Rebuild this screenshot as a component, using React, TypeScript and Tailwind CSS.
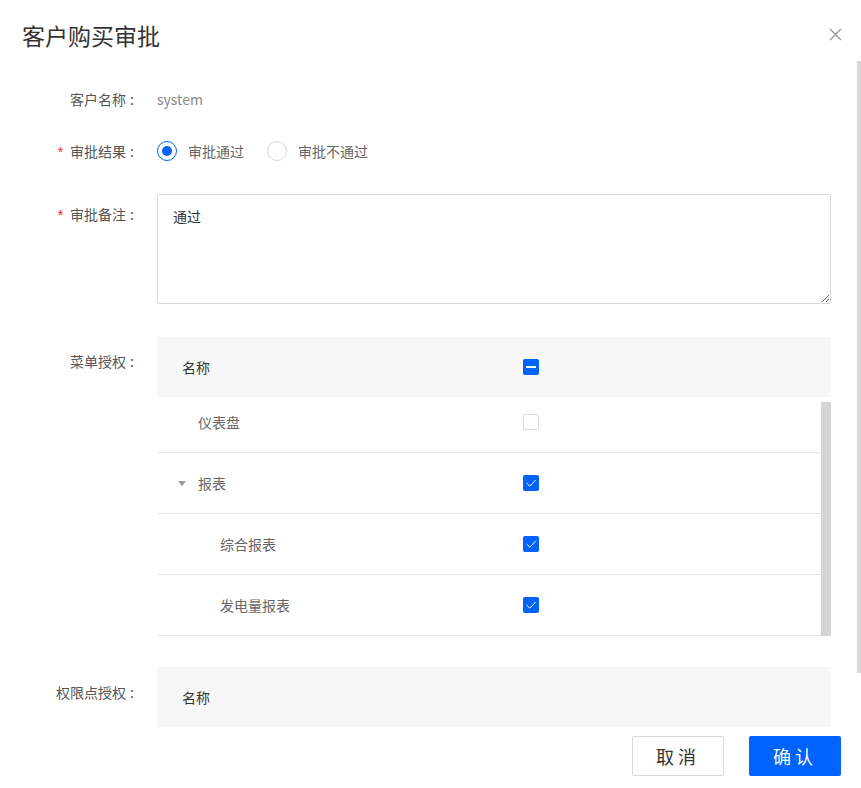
import * as React from 'react';

const BLUE = '#0062ff';

const Label: React.FC<{ text: string; required?: boolean; className?: string }> = ({ text, required, className }) => (
  <div className={`w-[137px] shrink-0 text-right text-[14px] leading-[22px] text-[#555] ${className || ''}`}>
    {required && <span className="mr-[7px] font-['Liberation_Sans',sans-serif] text-[14px] text-[#f5222d]">*</span>}
    {text}
    <span className="ml-[4px] mr-[3px]">:</span>
  </div>
);

const Radio: React.FC<{ checked?: boolean; label: string }> = ({ checked, label }) => (
  <label className="flex items-center">
    <span
      className={`flex h-5 w-5 items-center justify-center rounded-full border bg-white ${
        checked ? 'border-[#0062ff]' : 'border-[#d9d9d9]'
      }`}
    >
      {checked && <span className="h-[10px] w-[10px] rounded-full bg-[#0062ff]" />}
    </span>
    <span className="ml-[11px] text-[14px] leading-[22px] text-[#666]">{label}</span>
  </label>
);

const Checkbox: React.FC<{ state: 'on' | 'off' | 'half' }> = ({ state }) => {
  if (state === 'off') return <span className="block h-4 w-4 rounded-[2px] border border-[#d9d9d9] bg-white" />;
  return (
    <span className="flex h-4 w-4 items-center justify-center rounded-[2px]" style={{ background: BLUE }}>
      {state === 'half' ? (
        <span className="h-[1.5px] w-[10px] bg-white" />
      ) : (
        <svg width="16" height="16" viewBox="0 0 16 16" fill="none">
          <path d="M3.6 8 L6.8 11.2 L12.6 5" stroke="#fff" strokeWidth="1" />
        </svg>
      )}
    </span>
  );
};

const menuRows = [
  { name: '仪表盘', indent: 'pl-[41px]', state: 'off' as const },
  { name: '报表', indent: 'pl-[21px]', state: 'on' as const, caret: true },
  { name: '综合报表', indent: 'pl-[63px]', state: 'on' as const },
  { name: '发电量报表', indent: 'pl-[63px]', state: 'on' as const },
];

export default function App() {
  return (
    <div className="flex h-[788px] w-[861px] flex-col overflow-hidden bg-white font-['Noto_Sans_CJK_SC','Noto_Sans',sans-serif]">
      <div className="flex h-[61px] shrink-0 items-start justify-between pl-[22px] pr-[19px]">
        <div className="mt-[20px] text-[23px] leading-[30px] text-[#333]">客户购买审批</div>
        <svg className="mt-[28px]" width="13" height="13" viewBox="0 0 13 13" fill="none">
          <path d="M1 1 L12 12 M12 1 L1 12" stroke="#999" strokeWidth="1.4" />
        </svg>
      </div>

      {/* dialog body with its scrollbar */}
      <div className="flex h-[667px] shrink-0">
        <div className="h-full w-[857px] overflow-hidden">
          <div className="flex flex-col pr-[26px] pt-[27px]">
            <div className="flex h-[22px] items-center">
              <Label text="客户名称" />
              <div className="ml-[20px] text-[14px] leading-[22px] text-[#888]">system</div>
            </div>

            <div className="mt-[30px] flex h-[22px] items-center">
              <Label text="审批结果" required />
              <div className="ml-[20px] flex items-center gap-[23px]">
                <Radio checked label="审批通过" />
                <Radio label="审批不通过" />
              </div>
            </div>

            <div className="mt-[32px] flex items-start">
              <Label text="审批备注" required className="mt-[9px]" />
              <textarea
                readOnly
                defaultValue="通过"
                className="ml-[20px] h-[110px] w-[674px] rounded-[2px] border border-[#d9d9d9] px-[15px] py-[10px] text-[14px] leading-[22px] text-[#333] outline-none"
              />
            </div>

            <div className="mt-[33px] flex items-start">
              <Label text="菜单授权" className="mt-[13px]" />
              <div className="ml-[20px] w-[674px]">
                <div className="flex h-[60px] items-center bg-[#f7f7f7] text-[14px] text-[#333]">
                  <div className="w-[366px] pl-[25px]">名称</div>
                  <Checkbox state="half" />
                </div>
                <div className="flex h-[240px]">
                  <div className="h-full w-[664px] overflow-hidden">
                    <div className="-mt-[5px]">
                      {menuRows.map((row) => (
                        <div
                          key={row.name}
                          className="flex h-[61px] items-center border-b border-[#e8e8e8] text-[14px] text-[#666]"
                        >
                          <div className={`flex w-[366px] items-center ${row.indent}`}>
                            {row.caret && (
                              <svg className="mr-[12px]" width="8" height="5" viewBox="0 0 8 5">
                                <path d="M0 0 H8 L4 5 Z" fill="#999" />
                              </svg>
                            )}
                            {row.name}
                          </div>
                          <Checkbox state={row.state} />
                        </div>
                      ))}
                    </div>
                  </div>
                  <div className="w-[10px]">
                    <div className="mt-[5px] h-[234px] bg-[#d5d5d5]" />
                  </div>
                </div>
              </div>
            </div>

            <div className="mt-[30px] flex items-start">
              <Label text="权限点授权" className="mt-[14px]" />
              <div className="ml-[20px] w-[674px]">
                <div className="flex h-[60px] items-center bg-[#f7f7f7] text-[14px] text-[#333]">
                  <div className="w-[366px] pl-[25px]">名称</div>
                </div>
              </div>
            </div>
          </div>
        </div>
        <div className="w-[4px]">
          <div className="h-[612px] bg-[#d8d8d8]" />
        </div>
      </div>

      <div className="flex flex-1 items-start justify-end gap-[25px] pr-[20px] pt-[8px]">
        <button className="h-[40px] w-[92px] rounded-[2px] border border-[#d9d9d9] bg-white text-[18px] tracking-[4px] text-[#333]">
          取消
        </button>
        <button className="h-[40px] w-[92px] rounded-[2px] bg-[#0062ff] text-[18px] tracking-[4px] text-white">确认</button>
      </div>
    </div>
  );
}
